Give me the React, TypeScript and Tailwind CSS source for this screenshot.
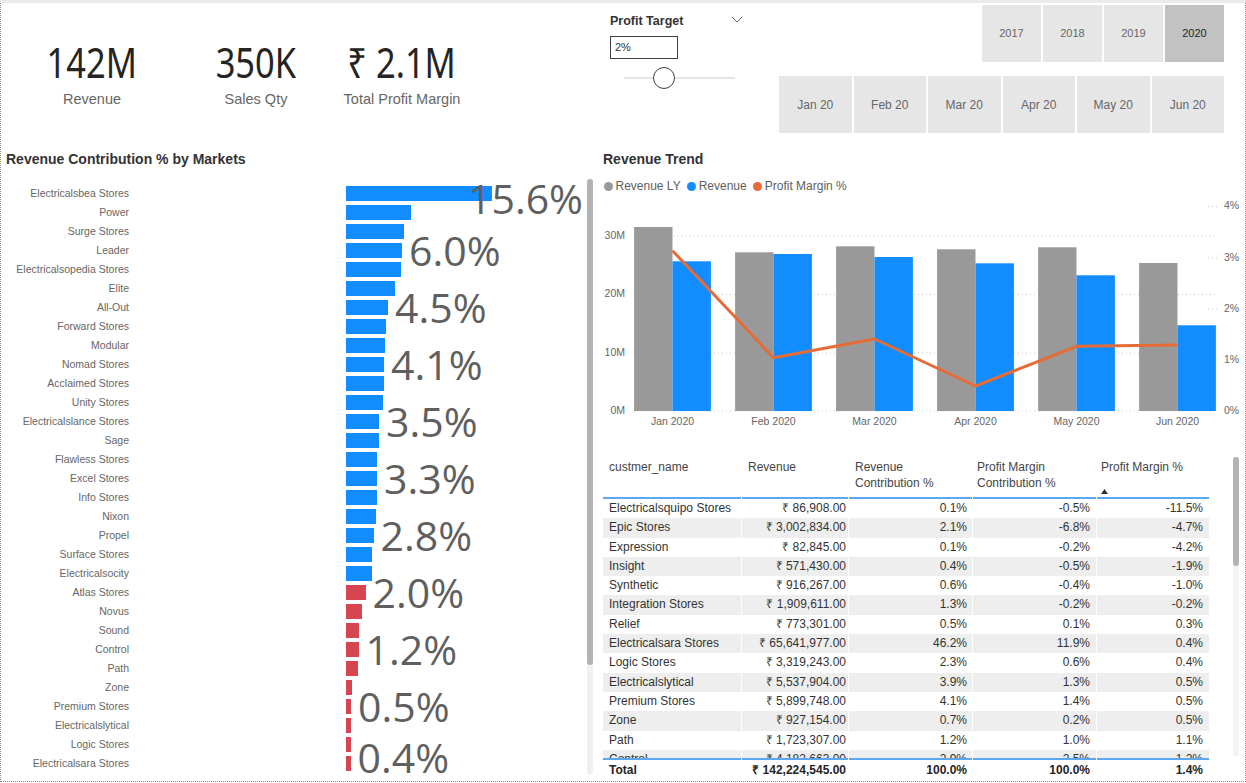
import React from 'react';

// market rows: name, bar width (px), data label, label vertical nudge
const markets: { name: string; w: number; label?: string; dy?: number }[] = [
  { name: 'Electricalsbea Stores', w: 146, label: '15.6%', dy: 5 },
  { name: 'Power', w: 65 },
  { name: 'Surge Stores', w: 58 },
  { name: 'Leader', w: 56, label: '6.0%' },
  { name: 'Electricalsopedia Stores', w: 55 },
  { name: 'Elite', w: 49 },
  { name: 'All-Out', w: 42, label: '4.5%' },
  { name: 'Forward Stores', w: 40 },
  { name: 'Modular', w: 39 },
  { name: 'Nomad Stores', w: 38, label: '4.1%' },
  { name: 'Acclaimed Stores', w: 38 },
  { name: 'Unity Stores', w: 37 },
  { name: 'Electricalslance Stores', w: 33, label: '3.5%' },
  { name: 'Sage', w: 33 },
  { name: 'Flawless Stores', w: 31 },
  { name: 'Excel Stores', w: 31, label: '3.3%' },
  { name: 'Info Stores', w: 30.5 },
  { name: 'Nixon', w: 30 },
  { name: 'Propel', w: 27.5, label: '2.8%' },
  { name: 'Surface Stores', w: 26 },
  { name: 'Electricalsocity', w: 26 },
  { name: 'Atlas Stores', w: 19.5, label: '2.0%' },
  { name: 'Novus', w: 16 },
  { name: 'Sound', w: 12.5 },
  { name: 'Control', w: 12.5, label: '1.2%' },
  { name: 'Path', w: 11.5 },
  { name: 'Zone', w: 5.5 },
  { name: 'Premium Stores', w: 5, label: '0.5%' },
  { name: 'Electricalslytical', w: 5 },
  { name: 'Logic Stores', w: 4.5 },
  { name: 'Electricalsara Stores', w: 4.5, label: '0.4%', dy: -6 },
];

const months = ['Jan 2020', 'Feb 2020', 'Mar 2020', 'Apr 2020', 'May 2020', 'Jun 2020'];
const lyTop = [227, 252.3, 246.3, 249.3, 247.3, 263];
const revTop = [261.3, 254, 257, 263.3, 275.3, 325.3];
const pmY = [250.7, 357.7, 339, 386, 346.3, 345];

const rows = [
  ['Electricalsquipo Stores', '₹ 86,908.00', '0.1%', '-0.5%', '-11.5%'],
  ['Epic Stores', '₹ 3,002,834.00', '2.1%', '-6.8%', '-4.7%'],
  ['Expression', '₹ 82,845.00', '0.1%', '-0.2%', '-4.2%'],
  ['Insight', '₹ 571,430.00', '0.4%', '-0.5%', '-1.9%'],
  ['Synthetic', '₹ 916,267.00', '0.6%', '-0.4%', '-1.0%'],
  ['Integration Stores', '₹ 1,909,611.00', '1.3%', '-0.2%', '-0.2%'],
  ['Relief', '₹ 773,301.00', '0.5%', '0.1%', '0.3%'],
  ['Electricalsara Stores', '₹ 65,641,977.00', '46.2%', '11.9%', '0.4%'],
  ['Logic Stores', '₹ 3,319,243.00', '2.3%', '0.6%', '0.4%'],
  ['Electricalslytical', '₹ 5,537,904.00', '3.9%', '1.3%', '0.5%'],
  ['Premium Stores', '₹ 5,899,748.00', '4.1%', '1.4%', '0.5%'],
  ['Zone', '₹ 927,154.00', '0.7%', '0.2%', '0.5%'],
  ['Path', '₹ 1,723,307.00', '1.2%', '1.0%', '1.1%'],
  ['Control', '₹ 4,182,663.00', '2.9%', '2.5%', '1.2%'],
];

const cols = 'grid grid-cols-[138px_106px_123px_123px_112px] gap-x-[1px]';

const Kpi = ({ value, label, className }: { value: string; label: string; className?: string }) => (
  <div className={`w-[144px] flex flex-col items-center pt-[39px] ${className ?? ''}`}>
    <div className="text-[41px] leading-[41px] text-[#252423] font-['Noto_Sans',sans-serif] scale-x-[0.84] whitespace-nowrap">
      {value}
    </div>
    <div className="mt-[7px] text-[14.5px] leading-[18px] text-[#666] whitespace-nowrap">{label}</div>
  </div>
);

const TrendChart = () => {
  const cx = (i: number) => 672.5 + 101 * i;
  return (
    <svg width={649} height={240} className="block">
      <g transform="translate(-596 -193)" fontFamily="'Liberation Sans', Arial, sans-serif">
        {[236, 294.7, 353, 411].map((y) => (
          <line key={y} x1={634} x2={1216} y1={y} y2={y} stroke="#c8c8c8" strokeDasharray="1 3" />
        ))}
        {[206.7, 258, 309, 360].map((y) => (
          <line key={y} x1={1208} x2={1219} y1={y} y2={y} stroke="#c8c8c8" strokeDasharray="1 3" />
        ))}
        {['30M', '20M', '10M', '0M'].map((t, i) => (
          <text key={t} x={625} y={[236, 294.7, 353, 411][i]} textAnchor="end" dominantBaseline="middle" fontSize={10.5} fill="#666">
            {t}
          </text>
        ))}
        {['4%', '3%', '2%', '1%', '0%'].map((t, i) => (
          <text key={t} x={1224} y={[206.7, 258, 309, 360, 411][i]} dominantBaseline="middle" fontSize={10.5} fill="#666">
            {t}
          </text>
        ))}
        {months.map((m, i) => (
          <g key={m}>
            <rect x={cx(i) - 38.4} y={lyTop[i]} width={38.4} height={411 - lyTop[i]} fill="#999999" />
            <rect x={cx(i)} y={revTop[i]} width={38.4} height={411 - revTop[i]} fill="#118DFF" />
            <text x={cx(i)} y={422} textAnchor="middle" dominantBaseline="middle" fontSize={10.5} fill="#666">
              {m}
            </text>
          </g>
        ))}
        <polyline
          points={pmY.map((y, i) => `${cx(i)},${y}`).join(' ')}
          fill="none"
          stroke="#E66C37"
          strokeWidth={3}
          strokeLinejoin="round"
        />
      </g>
    </svg>
  );
};

export default function App() {
  return (
    <div className="w-[1246px] h-[783px] bg-white flex flex-col font-['Liberation_Sans',Arial,sans-serif] overflow-hidden">
      <div className="h-[3px] bg-[#ebebeb]" />
      <div className="h-[779px] flex flex-col border-x border-b border-dotted border-[#8c8c8c]">
        {/* top: cards + slicers */}
        <div className="h-[137px] flex items-start">
          <div className="pl-[19px] flex">
            <Kpi value="142M" label="Revenue" />
            <Kpi value="350K" label="Sales Qty" className="ml-[20px]" />
            <Kpi value="₹ 2.1M" label="Total Profit Margin" className="ml-[2px]" />
          </div>

          <div className="ml-[136px] w-[135px] pt-[10px]">
            <div className="flex items-center justify-between pr-[2px] h-[16px]">
              <span className="text-[12.5px] font-bold text-[#333]">Profit Target</span>
              <svg width="12" height="7" viewBox="0 0 12 7" className="-mt-[3px]">
                <path d="M1 1 L6 6 L11 1" fill="none" stroke="#666" strokeWidth="1" />
              </svg>
            </div>
            <div className="mt-[7px] w-[68px] h-[23px] border-[1.5px] border-[#404040] pl-[4px] text-[11px] leading-[20px] text-[#333]">
              2%
            </div>
            <div className="relative mt-[8px] h-[22px]">
              <div className="absolute left-[13.5px] top-[10px] w-[111px] h-[2px] bg-[#e4e4e4]" />
              <div className="absolute left-[43px] top-0 w-[22px] h-[22px] rounded-full border-[1.5px] border-[#404040] bg-white" />
            </div>
          </div>

          <div className="ml-auto mr-[21px] pt-[2px] flex flex-col items-end">
            <div className="flex gap-[2px]">
              {['2017', '2018', '2019', '2020'].map((y) => (
                <div
                  key={y}
                  className={`w-[59px] h-[57px] flex items-center justify-center text-[11px] ${
                    y === '2020' ? 'bg-[#c2c2c2] text-[#252423]' : 'bg-[#e6e6e6] text-[#666]'
                  }`}
                >
                  {y}
                </div>
              ))}
            </div>
            <div className="mt-[14px] w-[445px] grid grid-cols-6 gap-[2px]">
              {['Jan 20', 'Feb 20', 'Mar 20', 'Apr 20', 'May 20', 'Jun 20'].map((m) => (
                <div key={m} className="h-[57px] bg-[#e6e6e6] flex items-center justify-center text-[12px] text-[#666]">
                  {m}
                </div>
              ))}
            </div>
          </div>
        </div>

        {/* bottom: bar chart + trend/table */}
        <div className="h-[641px] flex">
          <div className="w-[595px] flex flex-col">
            <div className="pl-[5px] pt-[10px] text-[14px] leading-[18px] font-bold text-[#333]">
              Revenue Contribution % by Markets
            </div>
            <div className="mt-[11px] h-[596px] flex">
              <div className="w-[581px] pt-[4.8px]">
                {markets.map((m, i) => (
                  <div key={m.name} className="h-[19px] flex items-center">
                    <div className="w-[128px] text-right text-[10.5px] leading-[19px] text-[#666] whitespace-nowrap">
                      {m.name}
                    </div>
                    <div className="ml-[217px] flex-1 h-full relative flex items-center">
                      <div
                        className={`h-[15px] ${i >= 21 ? 'bg-[#D64550]' : 'bg-[#118DFF]'}`}
                        style={{ width: m.w }}
                      />
                      {m.label && (
                        <span
                          className="absolute top-1/2 -translate-y-1/2 text-[41px] leading-none text-[#5f5f5f] whitespace-nowrap font-['Open_Sans',sans-serif]"
                          style={{ left: Math.min(m.w + 7, 122), marginTop: m.dy ?? 0 }}
                        >
                          {m.label}
                        </span>
                      )}
                    </div>
                  </div>
                ))}
              </div>
              <div className="ml-[5px] w-[6px] h-[596px] rounded-full bg-[#f0f0f0]">
                <div className="h-[486px] rounded-full bg-[#b3b3b3]" />
              </div>
            </div>
          </div>

          <div className="flex-1 flex flex-col">
            <div className="pl-[7px] pt-[10px] text-[14px] leading-[18px] font-bold text-[#333]">Revenue Trend</div>
            <div className="mt-[11px] pl-[7.5px] h-[14px] flex items-center text-[12px] leading-[14px] text-[#605e5c]">
              <span className="w-[9px] h-[9px] rounded-full bg-[#999999] mr-[3px]" />
              <span>Revenue LY</span>
              <span className="ml-[6px] w-[9px] h-[9px] rounded-full bg-[#118DFF] mr-[3px]" />
              <span>Revenue</span>
              <span className="ml-[6px] w-[9px] h-[9px] rounded-full bg-[#E66C37] mr-[3px]" />
              <span>Profit Margin %</span>
            </div>
            <TrendChart />

            <div className="mt-[22px] pl-[7px] flex">
              <div className="w-[606px] text-[12px]">
                <div className={`${cols} h-[44px] text-[#444] leading-[16px]`}>
                  <div className="pl-[6px] pt-[4px] border-b-2 border-[#5ba8f0]">custmer_name</div>
                  <div className="pl-[6px] pt-[4px] border-b-2 border-[#5ba8f0]">Revenue</div>
                  <div className="pl-[6px] pt-[4px] border-b-2 border-[#5ba8f0]">
                    Revenue
                    <br />
                    Contribution %
                  </div>
                  <div className="pl-[4px] pt-[4px] border-b-2 border-[#5ba8f0]">
                    Profit Margin
                    <br />
                    Contribution %
                  </div>
                  <div className="pl-[4px] pt-[4px] border-b-2 border-[#5ba8f0]">
                    Profit Margin %
                    <svg width="7" height="5" viewBox="0 0 7 5" className="block mt-[14px]">
                      <path d="M0 5 L3.5 0 L7 5 Z" fill="#333" />
                    </svg>
                  </div>
                </div>
                <div className="h-[259px] overflow-hidden text-[#333]">
                  {rows.map((r, i) => {
                    const bg = i % 2 === 1 ? 'bg-[#eeeeee]' : 'bg-white';
                    return (
                      <div key={r[0]} className={`${cols} h-[19.3px] leading-[19.3px] whitespace-nowrap`}>
                        <div className={`${bg} pl-[6px]`}>{r[0]}</div>
                        <div className={`${bg} pr-[2px] text-right`}>{r[1]}</div>
                        <div className={`${bg} pr-[5px] text-right`}>{r[2]}</div>
                        <div className={`${bg} pr-[6px] text-right`}>{r[3]}</div>
                        <div className={`${bg} pr-[6px] text-right`}>{r[4]}</div>
                      </div>
                    );
                  })}
                </div>
                <div className={`${cols} h-[22px] leading-[20px] font-bold text-[#252423] whitespace-nowrap`}>
                  <div className="pl-[6px] border-t-2 border-[#5ba8f0]">Total</div>
                  <div className="pr-[2px] text-right border-t-2 border-[#5ba8f0]">₹ 142,224,545.00</div>
                  <div className="pr-[5px] text-right border-t-2 border-[#5ba8f0]">100.0%</div>
                  <div className="pr-[6px] text-right border-t-2 border-[#5ba8f0]">100.0%</div>
                  <div className="pr-[6px] text-right border-t-2 border-[#5ba8f0]">1.4%</div>
                </div>
              </div>
              <div className="ml-[24px] mt-[2px] w-[6px] h-[300px] rounded-full bg-[#f3f3f3]">
                <div className="h-[109px] rounded-full bg-[#b3b3b3]" />
              </div>
            </div>
          </div>
        </div>
      </div>
    </div>
  );
}
